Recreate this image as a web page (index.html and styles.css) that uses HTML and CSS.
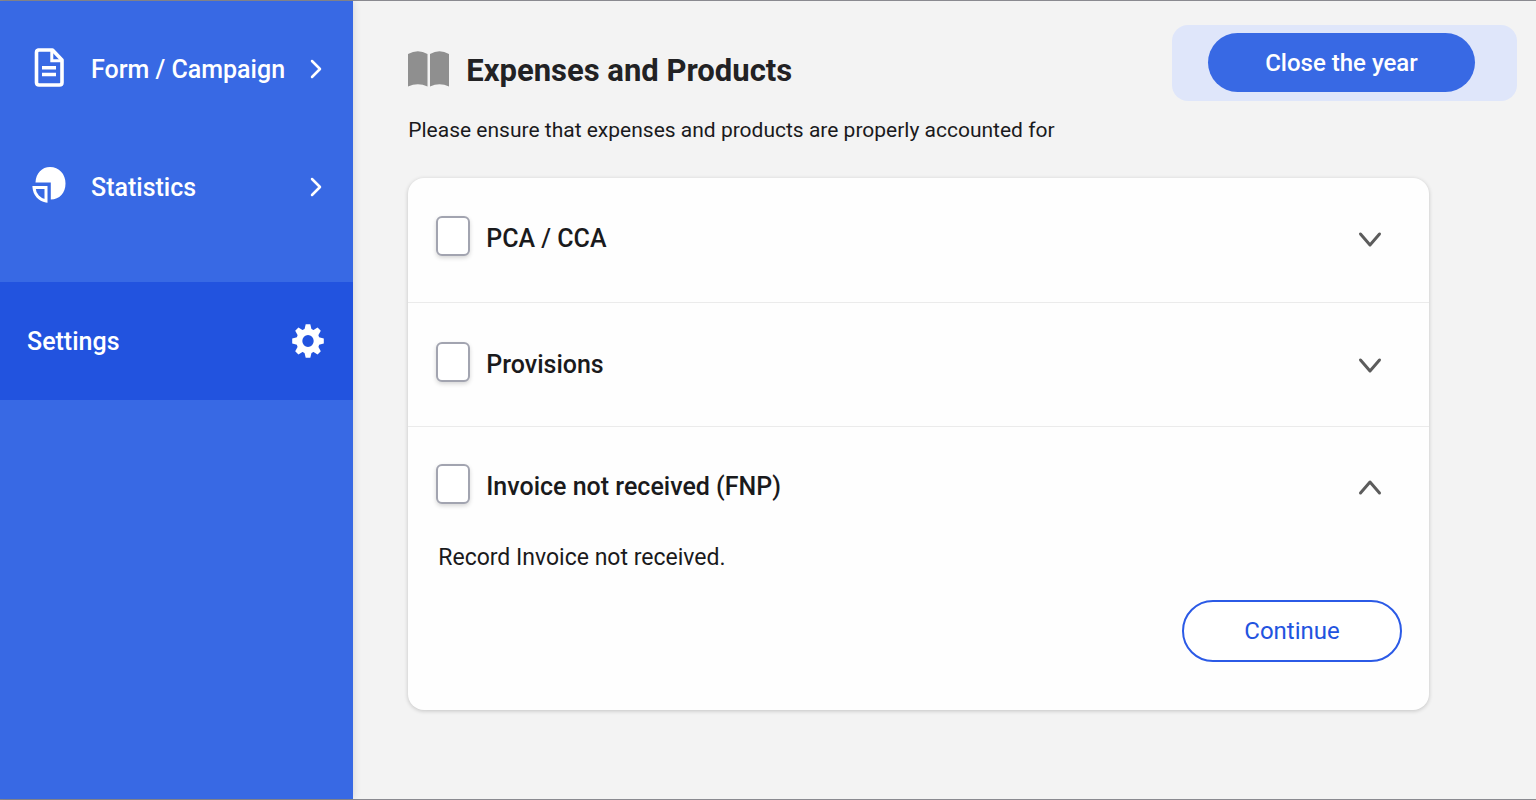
FILE: index.html
```html
<!DOCTYPE html>
<html lang="en">
<head>
<meta charset="utf-8">
<meta name="viewport" content="width=device-width, initial-scale=1">
<title>Expenses and Products</title>
<link rel="stylesheet" href="styles.css">
</head>
<body>
<div class="app">
  <nav class="sidebar" aria-label="Main">
    <a class="nav-item" href="#form">
      <svg class="nav-icon" viewBox="0 0 36 42" aria-hidden="true">
        <path d="M7 2H21.500L31 12V34.500Q31 37 28.500 37H8Q5.500 37 5.500 34.500V4.500Q5.500 2 8 2Z" fill="none" stroke="#fff" stroke-width="3.600" stroke-linejoin="round"/>
        <path d="M20.800 3V12.800H31" fill="none" stroke="#fff" stroke-width="3"/>
        <path d="M11 19.800H25M11 26.500H25" stroke="#fff" stroke-width="3.400"/>
      </svg>
      <span class="nav-label">Form / Campaign</span>
      <svg class="nav-arrow" viewBox="0 0 12 20" aria-hidden="true"><path d="M2 2L10 10L2 18" fill="none" stroke="#fff" stroke-width="2.500" stroke-linecap="round" stroke-linejoin="round"/></svg>
    </a>
    <a class="nav-item" href="#statistics">
      <svg class="nav-icon" viewBox="0 0 36 42" aria-hidden="true">
        <path d="M4.500 16.500C5 7 11 1 19 1C28 1 34.500 8 34.500 17.500C34.500 27 28.500 33.500 19.800 33.500V16.500Z" fill="#fff"/>
        <path d="M3 21.500H15V35C8.500 34 3.500 28.500 3 21.500Z" fill="none" stroke="#fff" stroke-width="3"/>
      </svg>
      <span class="nav-label">Statistics</span>
      <svg class="nav-arrow" viewBox="0 0 12 20" aria-hidden="true"><path d="M2 2L10 10L2 18" fill="none" stroke="#fff" stroke-width="2.500" stroke-linecap="round" stroke-linejoin="round"/></svg>
    </a>
    <a class="nav-item nav-settings" href="#settings" aria-current="page">
      <span class="nav-label">Settings</span>
      <svg class="gear" viewBox="-16 -16 32 32" preserveAspectRatio="none" aria-hidden="true">
        <circle r="8.700" fill="none" stroke="#fff" stroke-width="6"/>
        <g fill="#fff">
          <path id="tooth" d="M-3.800 -10L-2.300 -15.800H2.300L3.800 -10ZM-3.800 10L-2.300 15.800H2.300L3.800 10Z"/>
          <use href="#tooth" transform="rotate(45)"/>
          <use href="#tooth" transform="rotate(90)"/>
          <use href="#tooth" transform="rotate(135)"/>
        </g>
      </svg>
    </a>
  </nav>
  <main class="content">
    <header class="page-head">
      <div class="heading">
        <div class="title-row">
          <svg class="book" viewBox="0 0 42 36" aria-hidden="true"><path d="M0 3Q10 -2.500 19.500 3V35.500Q10 31 0 35.500ZM22 3Q31.500 -2.500 41 3V35.500Q31.500 31 22 35.500Z" fill="#8f8f8f"/></svg>
          <h1 class="title">Expenses and Products</h1>
        </div>
        <p class="subtitle">Please ensure that expenses and products are properly accounted for</p>
      </div>
      <div class="close-panel"><button class="btn btn-primary" type="button">Close the year</button></div>
    </header>
    <div class="card">
      <section class="row">
        <div class="row-head">
          <input class="check" type="checkbox" id="pca">
          <label class="row-label" for="pca">PCA / CCA</label>
          <button class="toggle" type="button" aria-expanded="false" aria-label="Expand PCA / CCA"><svg class="chevron" viewBox="0 0 24 20" aria-hidden="true"><path d="M2.500 6L12 17L21.500 6"/></svg></button>
        </div>
      </section>
      <section class="row">
        <div class="row-head">
          <input class="check" type="checkbox" id="provisions">
          <label class="row-label" for="provisions">Provisions</label>
          <button class="toggle" type="button" aria-expanded="false" aria-label="Expand Provisions"><svg class="chevron" viewBox="0 0 24 20" aria-hidden="true"><path d="M2.500 6L12 17L21.500 6"/></svg></button>
        </div>
      </section>
      <section class="row">
        <div class="row-head">
          <input class="check" type="checkbox" id="fnp">
          <label class="row-label" for="fnp">Invoice not received (FNP)</label>
          <button class="toggle" type="button" aria-expanded="true" aria-label="Collapse Invoice not received"><svg class="chevron" viewBox="0 0 24 20" aria-hidden="true"><path d="M2.500 17L12 6L21.500 17"/></svg></button>
        </div>
        <div class="row-body">
          <p class="row-text">Record Invoice not received.</p>
          <button class="btn btn-outline" type="button">Continue</button>
        </div>
      </section>
    </div>
  </main>
</div>
</body>
</html>
```
FILE: styles.css
```css
* { box-sizing: border-box; }

body {
  margin: 0;
  font-family: Roboto, "Liberation Sans", sans-serif;
  color: #1a1a1c;
  background: #f3f3f3;
}

h1, p { margin: 0; }

.app {
  display: flex;
  min-height: 100vh;
  border-top: 1px solid #8a8a90;
  border-bottom: 1px solid #8a8a90;
}

.sidebar {
  flex: 0 0 23%;
  padding-top: 9px;
  background: #3869e4;
  box-shadow: 0 0 8px rgba(0, 0, 0, 0.14);
}

.nav-item {
  display: flex;
  align-items: center;
  height: 118px;
  padding: 0 31px;
  color: #fff;
  font-size: 25px;
  font-weight: 500;
  text-decoration: none;
}

.nav-icon { width: 36px; height: 42px; margin-right: 24px; }
.nav-label { flex: 1; white-space: nowrap; }
.nav-arrow { width: 12px; height: 20px; }

.nav-settings {
  margin-top: 36px;
  padding: 0 29px 0 27px;
  background: #2253df;
}

.gear { width: 32px; height: 34px; }

.content { flex: 1; min-width: 0; padding: 24px 19px 24px 55px; }

.page-head {
  display: flex;
  justify-content: space-between;
  align-items: flex-start;
}

.heading { padding-top: 24px; }

.title-row { display: flex; align-items: center; gap: 16px; height: 44px; }
.book { width: 42px; height: 36px; margin-bottom: 4px; }
.title { font-size: 31px; line-height: 44px; font-weight: 700; color: #222224; }

.subtitle { margin-top: 21px; font-size: 21px; line-height: 32px; }

.close-panel {
  padding: 8px 42px 9px 36px;
  border-radius: 16px;
  background: #dfe6fa;
}

.btn {
  font-family: inherit;
  font-size: 24px;
  border-radius: 32px;
  cursor: pointer;
}

.btn-primary {
  display: block;
  width: 267px;
  height: 59px;
  border: 0;
  color: #fff;
  background: #3869e4;
  font-weight: 500;
}

.btn-outline {
  width: 220px;
  height: 62px;
  border: 2px solid #2b5ae6;
  color: #2253df;
  background: #fff;
}

.card {
  margin: 32px 88px 0 0;
  border-radius: 16px;
  background: #fefefe;
  box-shadow: 0 1px 4px rgba(0, 0, 0, 0.2);
}

.row { padding: 30px 27px 34px 28px; }
.row + .row { padding-top: 31px; padding-bottom: 32px; border-top: 1px solid #ebebeb; }
.row:last-child { padding-top: 29px; padding-bottom: 48px; }

.row-head { display: flex; align-items: center; height: 60px; }

.check {
  appearance: none;
  width: 34px;
  height: 40px;
  margin: 0 16px 4px 0;
  border: 2px solid #a2a4b0;
  border-radius: 6px;
  background: #fff;
  box-shadow: 0 2px 4px rgba(0, 0, 0, 0.16);
}

.check:checked { background: #3869e4; }

.row-label { flex: 1; font-size: 25px; font-weight: 500; }

.toggle {
  display: flex;
  padding: 12px 20px;
  border: 0;
  background: none;
  cursor: pointer;
}

.chevron {
  width: 24px;
  height: 20px;
  fill: none;
  stroke: #5c5c5c;
  stroke-width: 3;
  stroke-linecap: round;
  stroke-linejoin: round;
}

.row-body { display: flex; flex-direction: column; padding-top: 26px; }
.row-text { padding-left: 2px; font-size: 23px; line-height: 32px; }
.row-body .btn { align-self: flex-end; margin-top: 26px; }
```
